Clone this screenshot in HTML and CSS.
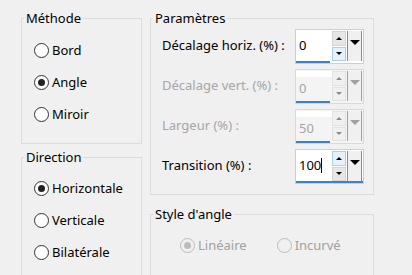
FILE: index.html
```html
<!DOCTYPE html>
<html lang="fr">
<head>
    <meta charset="UTF-8">
    <meta name="viewport" content="width=device-width, initial-scale=1.0">
    <link rel="stylesheet" href="styles.css">
    <title>Paramètres</title>
</head>
<body>
    <div class="dialog">
        <div class="col col-left">
            <fieldset class="group group-methode">
                <legend>Méthode</legend>
                <label class="radio"><span class="dot"></span>Bord</label>
                <label class="radio checked"><span class="dot"></span>Angle</label>
                <label class="radio"><span class="dot"></span>Miroir</label>
            </fieldset>

            <fieldset class="group group-direction">
                <legend>Direction</legend>
                <label class="radio checked"><span class="dot"></span>Horizontale</label>
                <label class="radio"><span class="dot"></span>Verticale</label>
                <label class="radio"><span class="dot"></span>Bilatérale</label>
            </fieldset>
        </div>

        <div class="col col-right">
            <fieldset class="group group-params">
                <legend>Paramètres</legend>

                <div class="row">
                    <span class="label">Décalage horiz. (%) :</span>
                    <div class="spin">
                        <div class="spin-body">
                            <span class="spin-field">0</span>
                            <div class="spin-arrows">
                                <span class="spin-btn up"></span>
                                <span class="spin-btn down hover"></span>
                            </div>
                            <span class="spin-drop"></span>
                        </div>
                        <div class="spin-track"><div class="spin-fill" style="width: 34px"></div></div>
                    </div>
                </div>

                <div class="row disabled">
                    <span class="label">Décalage vert. (%) :</span>
                    <div class="spin">
                        <div class="spin-body">
                            <span class="spin-field">0</span>
                            <div class="spin-arrows">
                                <span class="spin-btn up"></span>
                                <span class="spin-btn down"></span>
                            </div>
                            <span class="spin-drop"></span>
                        </div>
                        <div class="spin-track"><div class="spin-fill" style="width: 34px"></div></div>
                    </div>
                </div>

                <div class="row disabled">
                    <span class="label">Largeur (%) :</span>
                    <div class="spin">
                        <div class="spin-body">
                            <span class="spin-field">50</span>
                            <div class="spin-arrows">
                                <span class="spin-btn up"></span>
                                <span class="spin-btn down"></span>
                            </div>
                            <span class="spin-drop"></span>
                        </div>
                        <div class="spin-track"><div class="spin-fill" style="width: 34px"></div></div>
                    </div>
                </div>

                <div class="row">
                    <span class="label">Transition (%) :</span>
                    <div class="spin">
                        <div class="spin-body">
                            <span class="spin-field"><span class="caret">100</span></span>
                            <div class="spin-arrows">
                                <span class="spin-btn up hover"></span>
                                <span class="spin-btn down"></span>
                            </div>
                            <span class="spin-drop"></span>
                        </div>
                        <div class="spin-track"><div class="spin-fill" style="width: 100%"></div></div>
                    </div>
                </div>
            </fieldset>

            <fieldset class="group group-style">
                <legend>Style d'angle</legend>
                <div class="radios-inline">
                    <label class="radio disabled checked"><span class="dot"></span>Linéaire</label>
                    <label class="radio disabled"><span class="dot"></span>Incurvé</label>
                </div>
            </fieldset>
        </div>
    </div>
</body>
</html>
```

FILE: styles.css
```css
body {
    margin: 0;
    background-color: #f0f0f0;
    font-family: 'Noto Sans', sans-serif;
    font-size: 13px;
    color: #000;
    overflow: hidden;
}

.dialog {
    display: flex;
    gap: 8px;
    padding: 10px 0 0 21px;
    height: 275px;
    box-sizing: border-box;
    overflow: hidden;
}

.col {
    display: flex;
    flex-direction: column;
}

.col-left {
    width: 121px;
}

.col-right {
    width: 224px;
}

/* group boxes */

.group {
    margin: 0;
    padding: 0;
    border: 1px solid #dcdcdc;
    min-width: 0;
    box-sizing: border-box;
}

.group legend {
    margin-left: 2px;
    padding: 0 2px;
    line-height: 16px;
}

.group-methode {
    padding: 8px 0 13px 0;
}

.group-direction {
    margin-top: 5px;
    padding: 7px 0 40px 0;
}

.group-methode .radio,
.group-direction .radio {
    margin-left: 12px;
}

.group-params {
    padding: 3px 0 10px 11px;
    display: flex;
    flex-direction: column;
    gap: 5px;
}

.group-params legend {
    margin-left: -9px;
}

.group-style {
    margin-top: 11px;
    padding: 7px 0 30px 0;
}

/* radios */

.radio {
    display: flex;
    align-items: center;
    gap: 3px;
    height: 32px;
}

.dot {
    width: 15px;
    height: 15px;
    box-sizing: border-box;
    border: 1px solid #333;
    border-radius: 50%;
    background-color: #fff;
    display: flex;
    align-items: center;
    justify-content: center;
}

.radio.checked .dot::after {
    content: '';
    width: 7px;
    height: 7px;
    border-radius: 50%;
    background-color: #222;
}

.radio.disabled {
    color: #a0a0a0;
}

.radio.disabled .dot {
    border-color: #bcbcbc;
    background-color: #f0f0f0;
}

.radio.disabled.checked .dot::after {
    background-color: #bcbcbc;
}

.radios-inline {
    display: flex;
    gap: 30px;
    padding-left: 29px;
}

/* spin rows */

.row {
    display: grid;
    grid-template-columns: 133px 69px;
    align-items: center;
}

.row .label {
    margin-bottom: 4px;
}

.row.disabled .label {
    color: #a6a6a6;
}

.spin {
    height: 35px;
    box-sizing: border-box;
    border: 1px solid #cfcfcf;
    display: flex;
    flex-direction: column;
    background-color: #fff;
}

.spin-body {
    flex: 1;
    display: flex;
    padding: 1px 0 0 0;
}

.spin-field {
    flex: 1;
    display: flex;
    align-items: center;
    padding-left: 3px;
    padding-bottom: 2px;
}

.caret {
    border-right: 1px solid #000;
    line-height: 15px;
}

.spin-arrows {
    width: 14px;
    display: flex;
    flex-direction: column;
    gap: 1px;
}

.spin-btn {
    flex: 1;
    border: 1px solid #d4d4d4;
    background-color: #e6e6e6;
    display: flex;
    align-items: center;
    justify-content: center;
}

.spin-btn::after {
    content: '';
    border-left: 3px solid transparent;
    border-right: 3px solid transparent;
}

.spin-btn.up::after {
    border-bottom: 3px solid #000;
}

.spin-btn.down::after {
    border-top: 3px solid #000;
}

.spin-btn.hover {
    background-color: #e5f1fb;
    border-color: #a8cff0;
}

.spin-drop {
    width: 13px;
    margin: 0 1px 0 1px;
    border-left: 1px solid #8c8c8c;
    border-right: 1px solid #8c8c8c;
    background-color: #f0f0f0;
    display: flex;
    align-items: center;
    justify-content: center;
    padding-bottom: 8px;
}

.spin-drop::after {
    content: '';
    border-left: 5px solid transparent;
    border-right: 5px solid transparent;
    border-top: 5px solid #000;
}

.spin-track {
    height: 2px;
    background-color: #fff;
}

.spin-fill {
    height: 2px;
    background-color: #3c7fd8;
}

/* disabled spin boxes */

.row.disabled .spin {
    background-color: #f4f4f4;
    border-color: #d9d9d9;
}

.row.disabled .spin-field {
    color: #a6a6a6;
    border-top: 6px solid #fff;
}

.row.disabled .spin-btn {
    background-color: #f0f0f0;
    border-color: #e3e3e3;
}

.row.disabled .spin-btn.up::after {
    border-bottom-color: #8c8c8c;
}

.row.disabled .spin-btn.down::after {
    border-top-color: #8c8c8c;
}

.row.disabled .spin-drop {
    border-color: #a0a0a0;
}

.row.disabled .spin-drop::after {
    border-top-color: #a0a0a0;
}

.row.disabled .spin-track {
    background-color: #f4f4f4;
}
```
